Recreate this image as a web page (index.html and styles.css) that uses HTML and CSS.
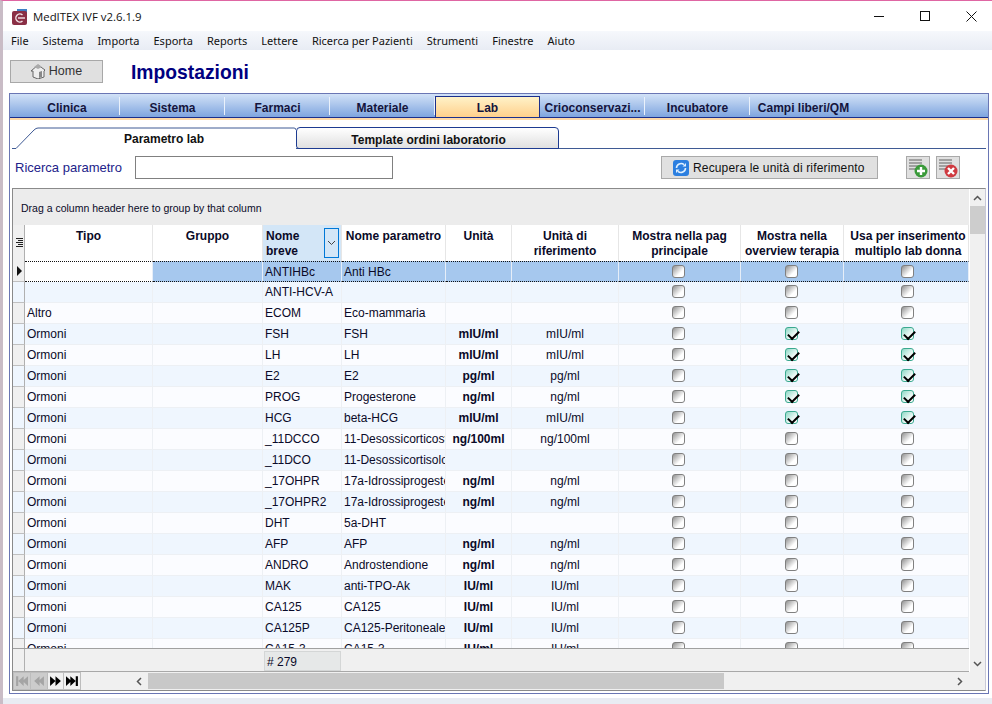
FILE: index.html
```html
<!DOCTYPE html>
<html>

<head>
    <meta charset="utf-8">
    <title>MedITEX IVF v2.6.1.9</title>
    <link rel="stylesheet" href="styles.css">
</head>

<body>
    <div class="titlebar">
        <svg class="app-icon" width="16" height="16" viewBox="0 0 16 16">
            <rect x="5" y="0" width="10" height="4" fill="#3f7fc4"/>
            <rect x="0" y="2" width="15" height="14" rx="2" fill="#8a2f45"/>
            <path d="M10.5 6a4 4 0 1 0 0 6" fill="none" stroke="#f2e4e8" stroke-width="1.4"/>
            <path d="M6 9h7" stroke="#f2e4e8" stroke-width="1.4"/>
        </svg>
        <span class="app-name">MedITEX IVF v2.6.1.9</span>
        <div class="win-buttons">
            <svg width="11" height="11" viewBox="0 0 11 11"><path d="M0 5.5h10" stroke="#111"/></svg>
            <svg width="11" height="11" viewBox="0 0 11 11"><rect x=".5" y=".5" width="9" height="9" fill="none" stroke="#111"/></svg>
            <svg width="11" height="11" viewBox="0 0 11 11"><path d="M.5.5l10 10M10.500.5l-10 10" stroke="#111"/></svg>
        </div>
    </div>

    <div class="menubar">
        <span>File</span>
        <span>Sistema</span>
        <span>Importa</span>
        <span>Esporta</span>
        <span>Reports</span>
        <span>Lettere</span>
        <span>Ricerca per Pazienti</span>
        <span>Strumenti</span>
        <span>Finestre</span>
        <span>Aiuto</span>
    </div>

    <div class="homebar">
        <button class="home-button">
            <svg width="16" height="16" viewBox="0 0 16 16">
                <path d="M1 8l7-6 7 5-1 1v6l-6 2-5-2V8z" fill="#eee" stroke="#666"/>
                <path d="M9 15V9l3-1v6z" fill="#888"/>
                <path d="M4 4l4-3 4 3-4 2z" fill="#aaa"/>
            </svg>
            Home
        </button>
        <h1>Impostazioni</h1>
    </div>

    <div class="panel">
        <div class="tabs">
            <div class="tab first">Clinica</div>
            <div class="tab">Sistema</div>
            <div class="tab">Farmaci</div>
            <div class="tab">Materiale</div>
            <div class="tab active">Lab</div>
            <div class="tab">Crioconservazi...</div>
            <div class="tab">Incubatore</div>
            <div class="tab last">Campi liberi/QM</div>
        </div>

        <div class="subtabs">
            <div class="subtab active">
                <svg class="subtab-shape" width="284" height="22" viewBox="0 0 284 22">
                    <path d="M0 21.500h4L22 3q2-2 4-2h256q2 0 2 2" fill="none" stroke="#3f5a94"/>
                </svg>
                Parametro lab
            </div>
            <div class="subtab">Template ordini laboratorio</div>
        </div>

        <div class="searchbar">
            <label class="search-label">Ricerca parametro</label>
            <input class="search-input" type="text">
            <button class="refresh-button">
                <svg width="16" height="16" viewBox="0 0 16 16">
                    <rect width="16" height="16" rx="3" fill="#2c7fe0"/>
                    <path d="M3.500 8a4.500 4.500 0 0 1 7.500-3.300M12.500 8A4.500 4.500 0 0 1 5 11.300" fill="none" stroke="#dff0ff" stroke-width="1.600"/>
                    <path d="M9.500 6.500h3.500V3zM6.500 9.500H3V13z" fill="#dff0ff"/>
                </svg>
                Recupera le unità di riferimento
            </button>
            <button class="icon-button add">
                <svg width="22" height="22" viewBox="0 0 22 22">
                    <path d="M2 3h13M2 6h13M2 9h9M2 12h7" stroke="#8c8c8c" stroke-width="1.500"/>
                    <circle cx="14" cy="14" r="6.500" fill="#3a9a3a"/>
                    <path d="M14 10v8M10 14h8" stroke="#fff" stroke-width="2.400"/>
                </svg>
            </button>
            <button class="icon-button">
                <svg width="22" height="22" viewBox="0 0 22 22">
                    <path d="M2 3h13M2 6h13M2 9h9M2 12h7" stroke="#8c8c8c" stroke-width="1.500"/>
                    <circle cx="14" cy="14" r="6.500" fill="#cf3a40"/>
                    <path d="M11 11l6 6M17 11l-6 6" stroke="#fff" stroke-width="2.400"/>
                </svg>
            </button>
        </div>

        <div class="grid">
            <div class="grid-main">
                <div class="grid-left">
                    <div class="groupbar">Drag a column header here to group by that column</div>
                    <div class="table-window">
                        <table class="lab-table">
                            <colgroup>
                                <col class="w-rh"><col class="w-tipo"><col class="w-gruppo"><col class="w-breve"><col class="w-nome">
                                <col class="w-unita"><col class="w-rif"><col class="w-pag"><col class="w-over"><col class="w-multi">
                            </colgroup>
                            <thead>
                                <tr>
                                    <th class="rh">
                                        <svg width="7" height="9" viewBox="0 0 7 9"><path d="M0 .5h7M2 2.500h5M0 4.500h7M2 6.500h5M0 8.500h7" stroke="#222"/></svg>
                                    </th>
                                    <th>Tipo</th>
                                    <th>Gruppo</th>
                                    <th class="sorted">
                                        Nome<br>breve
                                        <span class="sort-button">
                                            <svg width="9" height="6" viewBox="0 0 9 6"><path d="M1 1l3.500 3.500L8 1" fill="none" stroke="#444"/></svg>
                                        </span>
                                    </th>
                                    <th>Nome parametro</th>
                                    <th>Unità</th>
                                    <th>Unità di<br>riferimento</th>
                                    <th>Mostra nella pag<br>principale</th>
                                    <th>Mostra nella<br>overview terapia</th>
                                    <th class="multi">Usa per inserimento<br>multiplo lab donna</th>
                                </tr>
                            </thead>
                            <tbody>
                                <tr class="selected">
                                    <td class="rh"><span class="row-arrow"></span></td>
                                    <td class="current"></td><td></td><td>ANTIHBc</td><td>Anti HBc</td><td class="u"></td><td class="r"></td>
                                    <td class="c"><input class="cb" type="checkbox"></td><td class="c"><input class="cb" type="checkbox"></td><td class="c m"><input class="cb" type="checkbox"></td>
                                </tr>
                                <tr class="alt">
                                    <td class="rh"></td><td></td><td></td><td>ANTI-HCV-A</td><td></td><td class="u"></td><td class="r"></td>
                                    <td class="c"><input class="cb" type="checkbox"></td><td class="c"><input class="cb" type="checkbox"></td><td class="c m"><input class="cb" type="checkbox"></td>
                                </tr>
                                <tr>
                                    <td class="rh"></td><td>Altro</td><td></td><td>ECOM</td><td>Eco-mammaria</td><td class="u"></td><td class="r"></td>
                                    <td class="c"><input class="cb" type="checkbox"></td><td class="c"><input class="cb" type="checkbox"></td><td class="c m"><input class="cb" type="checkbox"></td>
                                </tr>
                                <tr class="alt">
                                    <td class="rh"></td><td>Ormoni</td><td></td><td>FSH</td><td>FSH</td><td class="u">mIU/ml</td><td class="r">mIU/ml</td>
                                    <td class="c"><input class="cb" type="checkbox"></td><td class="c"><input class="cb" type="checkbox" checked></td><td class="c m"><input class="cb" type="checkbox" checked></td>
                                </tr>
                                <tr>
                                    <td class="rh"></td><td>Ormoni</td><td></td><td>LH</td><td>LH</td><td class="u">mIU/ml</td><td class="r">mIU/ml</td>
                                    <td class="c"><input class="cb" type="checkbox"></td><td class="c"><input class="cb" type="checkbox" checked></td><td class="c m"><input class="cb" type="checkbox" checked></td>
                                </tr>
                                <tr class="alt">
                                    <td class="rh"></td><td>Ormoni</td><td></td><td>E2</td><td>E2</td><td class="u">pg/ml</td><td class="r">pg/ml</td>
                                    <td class="c"><input class="cb" type="checkbox"></td><td class="c"><input class="cb" type="checkbox" checked></td><td class="c m"><input class="cb" type="checkbox" checked></td>
                                </tr>
                                <tr>
                                    <td class="rh"></td><td>Ormoni</td><td></td><td>PROG</td><td>Progesterone</td><td class="u">ng/ml</td><td class="r">ng/ml</td>
                                    <td class="c"><input class="cb" type="checkbox"></td><td class="c"><input class="cb" type="checkbox" checked></td><td class="c m"><input class="cb" type="checkbox" checked></td>
                                </tr>
                                <tr class="alt">
                                    <td class="rh"></td><td>Ormoni</td><td></td><td>HCG</td><td>beta-HCG</td><td class="u">mIU/ml</td><td class="r">mIU/ml</td>
                                    <td class="c"><input class="cb" type="checkbox"></td><td class="c"><input class="cb" type="checkbox" checked></td><td class="c m"><input class="cb" type="checkbox" checked></td>
                                </tr>
                                <tr>
                                    <td class="rh"></td><td>Ormoni</td><td></td><td>_11DCCO</td><td>11-Desossicorticosterone</td><td class="u">ng/100ml</td><td class="r">ng/100ml</td>
                                    <td class="c"><input class="cb" type="checkbox"></td><td class="c"><input class="cb" type="checkbox"></td><td class="c m"><input class="cb" type="checkbox"></td>
                                </tr>
                                <tr class="alt">
                                    <td class="rh"></td><td>Ormoni</td><td></td><td>_11DCO</td><td>11-Desossicortisolo</td><td class="u"></td><td class="r"></td>
                                    <td class="c"><input class="cb" type="checkbox"></td><td class="c"><input class="cb" type="checkbox"></td><td class="c m"><input class="cb" type="checkbox"></td>
                                </tr>
                                <tr>
                                    <td class="rh"></td><td>Ormoni</td><td></td><td>_17OHPR</td><td>17a-Idrossiprogesterone</td><td class="u">ng/ml</td><td class="r">ng/ml</td>
                                    <td class="c"><input class="cb" type="checkbox"></td><td class="c"><input class="cb" type="checkbox"></td><td class="c m"><input class="cb" type="checkbox"></td>
                                </tr>
                                <tr class="alt">
                                    <td class="rh"></td><td>Ormoni</td><td></td><td>_17OHPR2</td><td>17a-Idrossiprogesterone</td><td class="u">ng/ml</td><td class="r">ng/ml</td>
                                    <td class="c"><input class="cb" type="checkbox"></td><td class="c"><input class="cb" type="checkbox"></td><td class="c m"><input class="cb" type="checkbox"></td>
                                </tr>
                                <tr>
                                    <td class="rh"></td><td>Ormoni</td><td></td><td>DHT</td><td>5a-DHT</td><td class="u"></td><td class="r"></td>
                                    <td class="c"><input class="cb" type="checkbox"></td><td class="c"><input class="cb" type="checkbox"></td><td class="c m"><input class="cb" type="checkbox"></td>
                                </tr>
                                <tr class="alt">
                                    <td class="rh"></td><td>Ormoni</td><td></td><td>AFP</td><td>AFP</td><td class="u">ng/ml</td><td class="r">ng/ml</td>
                                    <td class="c"><input class="cb" type="checkbox"></td><td class="c"><input class="cb" type="checkbox"></td><td class="c m"><input class="cb" type="checkbox"></td>
                                </tr>
                                <tr>
                                    <td class="rh"></td><td>Ormoni</td><td></td><td>ANDRO</td><td>Androstendione</td><td class="u">ng/ml</td><td class="r">ng/ml</td>
                                    <td class="c"><input class="cb" type="checkbox"></td><td class="c"><input class="cb" type="checkbox"></td><td class="c m"><input class="cb" type="checkbox"></td>
                                </tr>
                                <tr class="alt">
                                    <td class="rh"></td><td>Ormoni</td><td></td><td>MAK</td><td>anti-TPO-Ak</td><td class="u">IU/ml</td><td class="r">IU/ml</td>
                                    <td class="c"><input class="cb" type="checkbox"></td><td class="c"><input class="cb" type="checkbox"></td><td class="c m"><input class="cb" type="checkbox"></td>
                                </tr>
                                <tr>
                                    <td class="rh"></td><td>Ormoni</td><td></td><td>CA125</td><td>CA125</td><td class="u">IU/ml</td><td class="r">IU/ml</td>
                                    <td class="c"><input class="cb" type="checkbox"></td><td class="c"><input class="cb" type="checkbox"></td><td class="c m"><input class="cb" type="checkbox"></td>
                                </tr>
                                <tr class="alt">
                                    <td class="rh"></td><td>Ormoni</td><td></td><td>CA125P</td><td>CA125-Peritoneale</td><td class="u">IU/ml</td><td class="r">IU/ml</td>
                                    <td class="c"><input class="cb" type="checkbox"></td><td class="c"><input class="cb" type="checkbox"></td><td class="c m"><input class="cb" type="checkbox"></td>
                                </tr>
                                <tr>
                                    <td class="rh"></td><td>Ormoni</td><td></td><td>CA15-3</td><td>CA15-3</td><td class="u">IU/ml</td><td class="r">IU/ml</td>
                                    <td class="c"><input class="cb" type="checkbox"></td><td class="c"><input class="cb" type="checkbox"></td><td class="c m"><input class="cb" type="checkbox"></td>
                                </tr>
                            </tbody>
                        </table>
                    </div>
                    <div class="grid-footer">
                        <span class="foot-head"></span>
                        <span class="foot-total"># 279</span>
                    </div>
                </div>
                <div class="vscroll">
                    <span class="vbtn"><svg width="9" height="6" viewBox="0 0 9 6"><path d="M1 5l3.500-3.500L8 5" fill="none" stroke="#555" stroke-width="1.500"/></svg></span>
                    <span class="vthumb"></span>
                    <span class="vspace"></span>
                    <span class="vbtn"><svg width="9" height="6" viewBox="0 0 9 6"><path d="M1 1l3.500 3.500L8 1" fill="none" stroke="#555" stroke-width="1.500"/></svg></span>
                </div>
            </div>
            <div class="hscroll">
                <div class="nav">
                    <span class="nav-btn off"><svg width="13" height="12" viewBox="0 0 12 11"><path d="M1 1h2v9H1zM8 1v9L3 5.500zM12 1v9L7 5.500z" fill="#a4a4a4"/></svg></span>
                    <span class="nav-btn off"><svg width="13" height="12" viewBox="0 0 12 11"><path d="M7 1v9L2 5.500zM11 1v9L6 5.500z" fill="#a4a4a4"/></svg></span>
                    <span class="nav-btn"><svg width="13" height="12" viewBox="0 0 12 11"><path d="M1 1v9l5-4.500zM6 1v9l5-4.500z" fill="#000"/></svg></span>
                    <span class="nav-btn"><svg width="13" height="12" viewBox="0 0 12 11"><path d="M0 1v9l5-4.500zM4 1v9l5-4.500zM9 1h2v9H9z" fill="#000"/></svg></span>
                </div>
                <span class="harrow left"><svg width="6" height="9" viewBox="0 0 6 9"><path d="M5 1L1.500 4.500 5 8" fill="none" stroke="#555" stroke-width="1.500"/></svg></span>
                <span class="hthumb"></span>
                <span class="hspace"></span>
                <span class="harrow right"><svg width="6" height="9" viewBox="0 0 6 9"><path d="M1 1l3.500 3.500L1 8" fill="none" stroke="#555" stroke-width="1.500"/></svg></span>
            </div>
        </div>
    </div>
    <div class="statusband"></div>
</body>

</html>
```

FILE: styles.css
```css
* {
    box-sizing: border-box;
}

html {
    height: 100%;
}

body {
    margin: 0;
    height: 704px;
    overflow: hidden;
    display: flex;
    flex-direction: column;
    background: white;
    border-top: 1px solid #df66a3;
    border-left: 3px solid #c9bcc6;
    font-family: "Liberation Sans", Arial, sans-serif;
    font-size: 12px;
    color: #0a0a28;
}

/* window chrome */
.titlebar {
    height: 30px;
    display: flex;
    align-items: center;
    padding-left: 9px;
    flex-shrink: 0;
}

.app-icon {
    margin-top: 1px;
}

.app-name {
    margin-left: 5px;
    font-family: "Open Sans", sans-serif;
    font-size: 11.400px;
    color: #111;
}

.win-buttons {
    margin-left: auto;
    display: flex;
    gap: 35px;
    padding-right: 15px;
}

.menubar {
    height: 19px;
    display: flex;
    align-items: center;
    gap: 14px;
    padding-left: 8px;
    flex-shrink: 0;
    background: linear-gradient(#f6f8fc, #e8ecf4);
    font-family: "Noto Sans", sans-serif;
    font-size: 11px;
    color: #111;
}

.homebar {
    height: 43px;
    display: flex;
    align-items: center;
    padding-left: 7px;
    flex-shrink: 0;
}

.home-button {
    width: 93px;
    height: 23px;
    margin-top: -1px;
    display: flex;
    align-items: center;
    justify-content: center;
    gap: 3px;
    padding: 0 1px 0 0;
    background: #e0e0e0;
    border: 1px solid #a8a8a8;
    font-family: "Liberation Sans", sans-serif;
    font-size: 12.500px;
    color: #333;
}

h1 {
    margin: 3px 0 0 28px;
    font-size: 19.300px;
    font-weight: bold;
    color: #000080;
}

/* main tabs */
.panel {
    height: 601px;
    margin: 0 3px 0 6px;
    display: flex;
    flex-direction: column;
    flex-shrink: 0;
    border: 1px solid #6a76b4;
}

.tabs {
    height: 26px;
    display: flex;
    flex-shrink: 0;
    background: linear-gradient(#d2e2f7, #7fa5df);
    background-size: 100% 23px;
    background-repeat: no-repeat;
    border-bottom: 2px solid #ffd9a8;
    position: relative;
}

.tabs::after {
    content: "";
    position: absolute;
    left: 0;
    right: 0;
    top: 23px;
    height: 1px;
    background: #1b2f8c;
}

.tab {
    width: 105px;
    height: 23px;
    padding-top: 7px;
    text-align: center;
    font-weight: bold;
    color: #14143c;
    position: relative;
}

.tab::before {
    content: "";
    position: absolute;
    right: 0;
    top: 3px;
    bottom: 2px;
    width: 1px;
    background: #eaf1fb;
}

.tab.first {
    width: 110px;
    padding-left: 4px;
}

.tab.last {
    padding-left: 2px;
}

.tab.last::before,
.tab.active::before {
    display: none;
}

.tab.active {
    height: 22px;
    margin-top: 2px;
    padding-top: 4px;
    background: linear-gradient(#fff2c8, #ffd08c);
    border: 1px solid #1b2f8c;
    z-index: 1;
}

/* sub tabs */
.subtabs {
    height: 22px;
    margin: 7px 2px 0 2px;
    display: flex;
    flex-shrink: 0;
    border-bottom: 1px solid #3f5a94;
}

.subtab {
    width: 263px;
    height: 22px;
    padding: 5px 0 0 2px;
    text-align: center;
    font-weight: bold;
    background: linear-gradient(#fff, #e0e0e0);
    border: 1px solid #1d3b91;
    border-radius: 4px 4px 0 3px;
    color: #111;
}

.subtab.active {
    width: 284px;
    padding-left: 20px;
    background: white;
    border: none;
    position: relative;
}

.subtab-shape {
    position: absolute;
    left: 0;
    top: 0;
}

/* search row */
.searchbar {
    height: 39px;
    display: flex;
    align-items: flex-start;
    padding: 7px 0 0 5px;
    flex-shrink: 0;
}

.search-label {
    width: 120px;
    padding-top: 4px;
    font-size: 13px;
    color: #22228a;
}

.search-input {
    width: 258px;
    height: 23px;
    border: 1px solid #808080;
}

.refresh-button {
    width: 217px;
    height: 23px;
    margin-left: 268px;
    display: flex;
    align-items: center;
    gap: 4px;
    padding: 0 0 0 11px;
    background: #e0e0e0;
    border: 1px solid #a9a9a9;
    font-family: "Liberation Sans", sans-serif;
    font-size: 12px;
    letter-spacing: .15px;
    color: #111;
}

.icon-button {
    width: 24px;
    height: 23px;
    padding: 0;
    display: flex;
    align-items: center;
    justify-content: center;
    background: #e0e0e0;
    border: 1px solid #a9a9a9;
    margin-left: 6px;
}

.icon-button.add {
    margin-left: 28px;
}

/* grid */
.grid {
    flex: 1;
    min-height: 0;
    margin: 0 2px 2px 2px;
    display: flex;
    flex-direction: column;
    border: 1px solid #8a8a8a;
    border-right-color: #c8c8d8;
    background: #f0f0f0;
}

.grid-main {
    flex: 1;
    min-height: 0;
    display: flex;
}

.grid-left {
    width: 956px;
    display: flex;
    flex-direction: column;
}

.groupbar {
    height: 36px;
    padding: 13px 0 0 8px;
    flex-shrink: 0;
    background: #ececec;
    font-size: 10.500px;
}

.table-window {
    flex: 1;
    min-height: 0;
    overflow: hidden;
    background: white;
}

.lab-table {
    width: 956px;
    table-layout: fixed;
    border-collapse: separate;
    border-spacing: 0;
}

.w-rh { width: 12px; }
.w-tipo { width: 128px; }
.w-gruppo { width: 110px; }
.w-breve { width: 79px; }
.w-nome { width: 104px; }
.w-unita { width: 66px; }
.w-rif { width: 107px; }
.w-pag { width: 122px; }
.w-over { width: 103px; }
.w-multi { width: 125px; }

.lab-table th {
    height: 36px;
    padding: 4px 0 0 0;
    vertical-align: top;
    text-align: center;
    font-size: 12px;
    line-height: 15px;
    font-weight: bold;
    white-space: nowrap;
    overflow: hidden;
    background: white;
    border-right: 1px solid #e6e6e6;
}

.lab-table th.rh {
    padding-top: 13px;
    background: #f0f0f0;
    border-right: 1px solid #b0b0b0;
}

.lab-table th.rh svg {
    display: block;
    margin-left: 3px;
}

.lab-table th.multi {
    padding-left: 4px;
}

.lab-table th.sorted {
    padding-left: 3px;
    text-align: left;
    background: #d3e6f7;
    position: relative;
}

.sort-button {
    position: absolute;
    right: 2px;
    top: 3px;
    width: 15px;
    height: 30px;
    display: flex;
    align-items: center;
    justify-content: center;
    border: 1px solid #0078d7;
}

.lab-table td {
    height: 21px;
    padding: 0 2px;
    white-space: nowrap;
    overflow: hidden;
    background: #fbfcff;
    border-right: 1px solid #edf0f4;
    border-bottom: 1px solid #edf0f4;
}

.lab-table tr.alt td {
    background: #eff6fe;
}

.lab-table td.rh {
    padding: 0;
    background: #f0f0f0;
    border-right: 1px solid #b0b0b0;
    border-bottom: 1px solid #c0c0c0;
}

.lab-table td.u {
    text-align: center;
    font-weight: bold;
}

.lab-table td.r {
    text-align: center;
}

.lab-table td.c {
    text-align: center;
    padding: 0 2px 0 0;
}

.lab-table td.c.m {
    padding: 0 0 0 2px;
}

.lab-table tr.selected td {
    background: #a6c8ee;
    border-top: 1px dotted #111;
    border-bottom: 1px dotted #111;
    border-right-color: #e6eef8;
}

.lab-table tr.selected td.current {
    background: white;
}

.lab-table tr.selected td.rh {
    background: #f0f0f0;
    border-top: none;
    border-bottom: 1px solid #c0c0c0;
    border-right-color: #b0b0b0;
}

.row-arrow {
    display: block;
    width: 0;
    height: 0;
    margin-left: 4px;
    border-left: 5px solid #111;
    border-top: 5px solid transparent;
    border-bottom: 5px solid transparent;
}

.cb {
    appearance: none;
    display: block;
    width: 13px;
    height: 13px;
    margin: 0 auto 1px;
    border: 1px solid #808080;
    border-radius: 3px;
    background: linear-gradient(135deg, #909090, #fff 65%);
    position: relative;
}

.cb:checked {
    border-color: #3aa98f;
    background: linear-gradient(135deg, #8ed8c6, #fff 75%);
}

.cb:checked::after {
    content: "";
    position: absolute;
    left: 2px;
    top: 1px;
    width: 9px;
    height: 5px;
    border-left: 2px solid #000;
    border-bottom: 2px solid #000;
    transform: rotate(-45deg) translate(-1px, 1px);
}

.grid-footer {
    height: 24px;
    display: flex;
    flex-shrink: 0;
    border-top: 1px solid #a0a0a0;
    border-bottom: 1px solid #a8a8a8;
    background: #f0f0f0;
}

.foot-head {
    width: 12px;
    border-right: 1px solid #b0b0b0;
}

.foot-total {
    width: 77px;
    height: 20px;
    margin: 2px 0 0 239px;
    padding: 3px 0 0 2px;
    background: #e6e8e8;
    border: 1px solid #d4d6d6;
}

.vscroll {
    flex: 1;
    display: flex;
    flex-direction: column;
    background: #f0f0f0;
    border-left: 1px solid #fff;
}

.vbtn {
    height: 17px;
    display: flex;
    align-items: center;
    justify-content: center;
    flex-shrink: 0;
}

.vthumb {
    height: 28px;
    flex-shrink: 0;
    background: #cdcdcd;
}

.vspace {
    flex: 1;
}

.hscroll {
    height: 18px;
    display: flex;
    align-items: center;
    flex-shrink: 0;
    background: #f0f0f0;
}

.nav {
    width: 68px;
    height: 18px;
    display: flex;
    gap: 1px;
    padding: 1px;
    background: #bdbdbd;
}

.nav-btn {
    width: 16px;
    display: flex;
    align-items: center;
    justify-content: center;
    background: #f0f0f0;
}

.nav-btn.off {
    background: #cccccc;
}

.harrow {
    display: flex;
    align-items: center;
    justify-content: center;
    width: 16px;
}

.harrow.left {
    margin-left: 50px;
}

.hthumb {
    width: 576px;
    height: 16px;
    margin-left: 1px;
    background: #c8c8c8;
}

.hspace {
    width: 228px;
}

.statusband {
    height: 6px;
    margin-top: 4px;
    flex-shrink: 0;
    background: #e9ecf3;
}
```
